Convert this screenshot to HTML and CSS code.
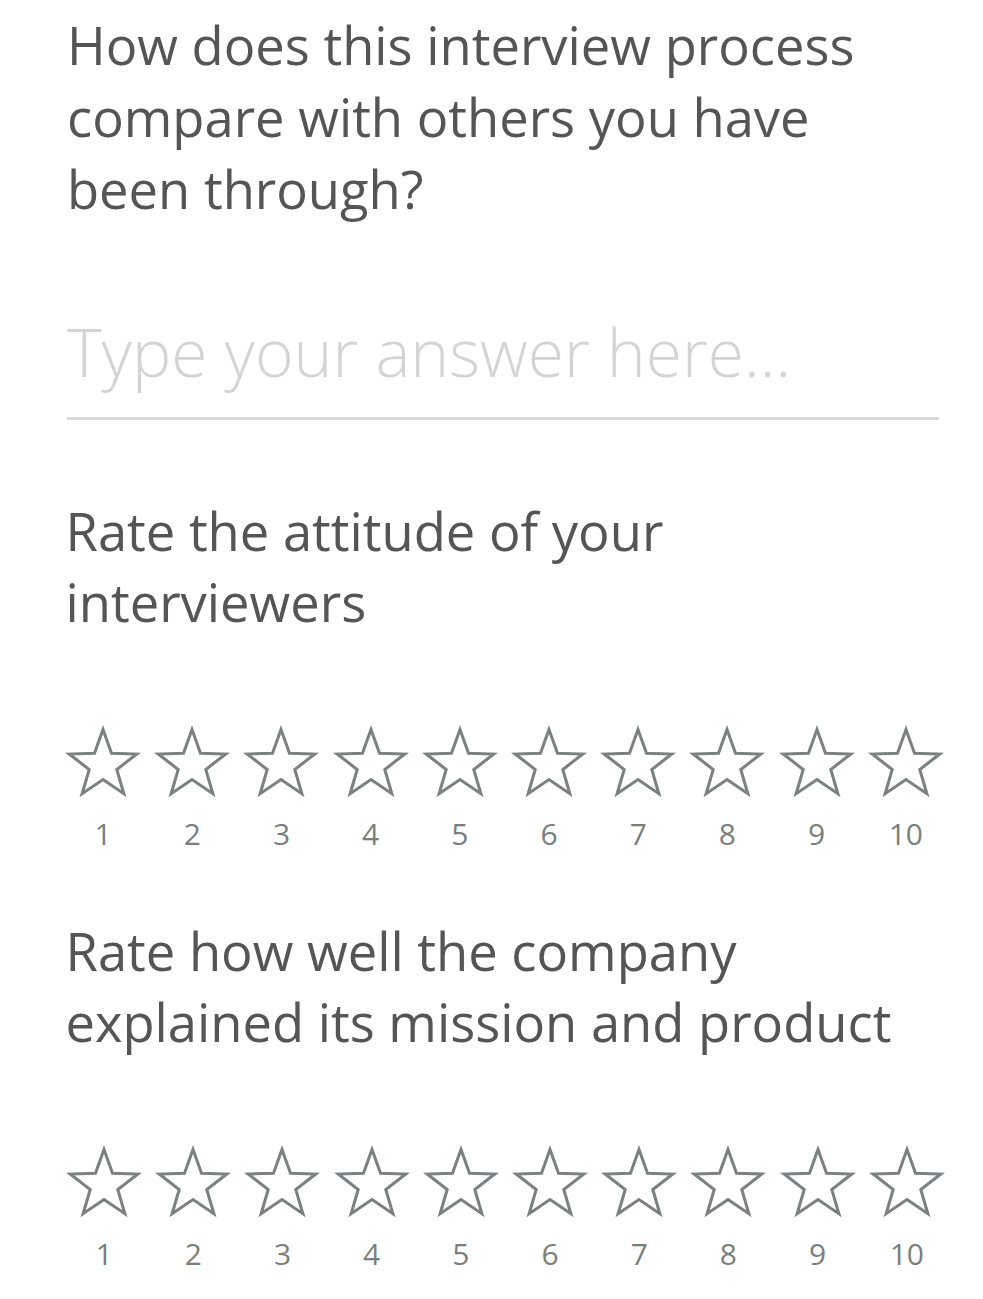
FILE: index.html
```html
<!DOCTYPE html>
<html lang="en">
<head>
<meta charset="utf-8">
<title>Interview feedback</title>
<link rel="stylesheet" href="styles.css">
</head>
<body>
<main class="survey">
  <section class="question">
    <h2 class="q-title q-first">How does this interview process compare with others you have been through?</h2>
    <div class="answer">
      <span class="placeholder">Type your answer here...</span>
    </div>
  </section>

  <section class="question">
    <h2 class="q-title q-rate q-second">Rate the attitude of your interviewers</h2>
    <div class="rating">
      <div class="opt"><svg class="star" viewBox="0 0 80 76"><polygon points="40,5.5 48.52,29.27 73.76,30.03 53.79,45.48 60.87,69.72 40,55.5 19.13,69.72 26.21,45.48 6.24,30.03 31.48,29.27"/></svg><span class="num">1</span></div>
      <div class="opt"><svg class="star" viewBox="0 0 80 76"><polygon points="40,5.5 48.52,29.27 73.76,30.03 53.79,45.48 60.87,69.72 40,55.5 19.13,69.72 26.21,45.48 6.24,30.03 31.48,29.27"/></svg><span class="num">2</span></div>
      <div class="opt"><svg class="star" viewBox="0 0 80 76"><polygon points="40,5.5 48.52,29.27 73.76,30.03 53.79,45.48 60.87,69.72 40,55.5 19.13,69.72 26.21,45.48 6.24,30.03 31.48,29.27"/></svg><span class="num">3</span></div>
      <div class="opt"><svg class="star" viewBox="0 0 80 76"><polygon points="40,5.5 48.52,29.27 73.76,30.03 53.79,45.48 60.87,69.72 40,55.5 19.13,69.72 26.21,45.48 6.24,30.03 31.48,29.27"/></svg><span class="num">4</span></div>
      <div class="opt"><svg class="star" viewBox="0 0 80 76"><polygon points="40,5.5 48.52,29.27 73.76,30.03 53.79,45.48 60.87,69.72 40,55.5 19.13,69.72 26.21,45.48 6.24,30.03 31.48,29.27"/></svg><span class="num">5</span></div>
      <div class="opt"><svg class="star" viewBox="0 0 80 76"><polygon points="40,5.5 48.52,29.27 73.76,30.03 53.79,45.48 60.87,69.72 40,55.5 19.13,69.72 26.21,45.48 6.24,30.03 31.48,29.27"/></svg><span class="num">6</span></div>
      <div class="opt"><svg class="star" viewBox="0 0 80 76"><polygon points="40,5.5 48.52,29.27 73.76,30.03 53.79,45.48 60.87,69.72 40,55.5 19.13,69.72 26.21,45.48 6.24,30.03 31.48,29.27"/></svg><span class="num">7</span></div>
      <div class="opt"><svg class="star" viewBox="0 0 80 76"><polygon points="40,5.5 48.52,29.27 73.76,30.03 53.79,45.48 60.87,69.72 40,55.5 19.13,69.72 26.21,45.48 6.24,30.03 31.48,29.27"/></svg><span class="num">8</span></div>
      <div class="opt"><svg class="star" viewBox="0 0 80 76"><polygon points="40,5.5 48.52,29.27 73.76,30.03 53.79,45.48 60.87,69.72 40,55.5 19.13,69.72 26.21,45.48 6.24,30.03 31.48,29.27"/></svg><span class="num">9</span></div>
      <div class="opt"><svg class="star" viewBox="0 0 80 76"><polygon points="40,5.5 48.52,29.27 73.76,30.03 53.79,45.48 60.87,69.72 40,55.5 19.13,69.72 26.21,45.48 6.24,30.03 31.48,29.27"/></svg><span class="num">10</span></div>
    </div>
  </section>

  <section class="question">
    <h2 class="q-title q-rate q-third">Rate how well the company explained its mission and product</h2>
    <div class="rating rating-b">
      <div class="opt"><svg class="star" viewBox="0 0 80 76"><polygon points="40,5.5 48.52,29.27 73.76,30.03 53.79,45.48 60.87,69.72 40,55.5 19.13,69.72 26.21,45.48 6.24,30.03 31.48,29.27"/></svg><span class="num">1</span></div>
      <div class="opt"><svg class="star" viewBox="0 0 80 76"><polygon points="40,5.5 48.52,29.27 73.76,30.03 53.79,45.48 60.87,69.72 40,55.5 19.13,69.72 26.21,45.48 6.24,30.03 31.48,29.27"/></svg><span class="num">2</span></div>
      <div class="opt"><svg class="star" viewBox="0 0 80 76"><polygon points="40,5.5 48.52,29.27 73.76,30.03 53.79,45.48 60.87,69.72 40,55.5 19.13,69.72 26.21,45.48 6.24,30.03 31.48,29.27"/></svg><span class="num">3</span></div>
      <div class="opt"><svg class="star" viewBox="0 0 80 76"><polygon points="40,5.5 48.52,29.27 73.76,30.03 53.79,45.48 60.87,69.72 40,55.5 19.13,69.72 26.21,45.48 6.24,30.03 31.48,29.27"/></svg><span class="num">4</span></div>
      <div class="opt"><svg class="star" viewBox="0 0 80 76"><polygon points="40,5.5 48.52,29.27 73.76,30.03 53.79,45.48 60.87,69.72 40,55.5 19.13,69.72 26.21,45.48 6.24,30.03 31.48,29.27"/></svg><span class="num">5</span></div>
      <div class="opt"><svg class="star" viewBox="0 0 80 76"><polygon points="40,5.5 48.52,29.27 73.76,30.03 53.79,45.48 60.87,69.72 40,55.5 19.13,69.72 26.21,45.48 6.24,30.03 31.48,29.27"/></svg><span class="num">6</span></div>
      <div class="opt"><svg class="star" viewBox="0 0 80 76"><polygon points="40,5.5 48.52,29.27 73.76,30.03 53.79,45.48 60.87,69.72 40,55.5 19.13,69.72 26.21,45.48 6.24,30.03 31.48,29.27"/></svg><span class="num">7</span></div>
      <div class="opt"><svg class="star" viewBox="0 0 80 76"><polygon points="40,5.5 48.52,29.27 73.76,30.03 53.79,45.48 60.87,69.72 40,55.5 19.13,69.72 26.21,45.48 6.24,30.03 31.48,29.27"/></svg><span class="num">8</span></div>
      <div class="opt"><svg class="star" viewBox="0 0 80 76"><polygon points="40,5.5 48.52,29.27 73.76,30.03 53.79,45.48 60.87,69.72 40,55.5 19.13,69.72 26.21,45.48 6.24,30.03 31.48,29.27"/></svg><span class="num">9</span></div>
      <div class="opt"><svg class="star" viewBox="0 0 80 76"><polygon points="40,5.5 48.52,29.27 73.76,30.03 53.79,45.48 60.87,69.72 40,55.5 19.13,69.72 26.21,45.48 6.24,30.03 31.48,29.27"/></svg><span class="num">10</span></div>
    </div>
  </section>
</main>
</body>
</html>
```

FILE: styles.css
```css
* { box-sizing: border-box; }

html, body {
  margin: 0;
  padding: 0;
  background: #ffffff;
}

body {
  font-family: "Open Sans", "Noto Sans", "Liberation Sans", sans-serif;
  color: #555555;
}

.survey {
  width: 983px;
  padding: 9px 44px 0 67px;
}

.q-title {
  margin: 0;
  font-weight: 400;
  font-size: 52.5px;
  color: #555555;
  width: 872px;
}

.q-first {
  line-height: 72px;
}

.q-rate {
  line-height: 71px;
  margin-left: -1.5px;
}

.q-second { margin-top: 75px; }
.q-third { margin-top: 61.4px; }

.answer {
  margin-top: 90px;
  width: 872px;
  border-bottom: 3px solid #d9d9d9;
  padding-bottom: 30px;
}

.placeholder {
  display: block;
  font-size: 66px;
  font-weight: 300;
  line-height: 72px;
  color: #d4d4d4;
  white-space: nowrap;
}

.rating {
  display: grid;
  grid-template-columns: repeat(10, 89.2px);
  margin-left: -8.5px;
  margin-top: 87px;
}

.rating-b { margin-left: -7.5px; }

.opt {
  display: flex;
  flex-direction: column;
  align-items: center;
}

.star {
  width: 80px;
  height: 76px;
  display: block;
}

.star polygon {
  fill: none;
  stroke: #7b817e;
  stroke-width: 3;
  stroke-linejoin: miter;
  stroke-miterlimit: 10;
}

.num {
  font-size: 30px;
  line-height: 38px;
  margin-top: 15.4px;
  color: #7a7f7c;
}
```
